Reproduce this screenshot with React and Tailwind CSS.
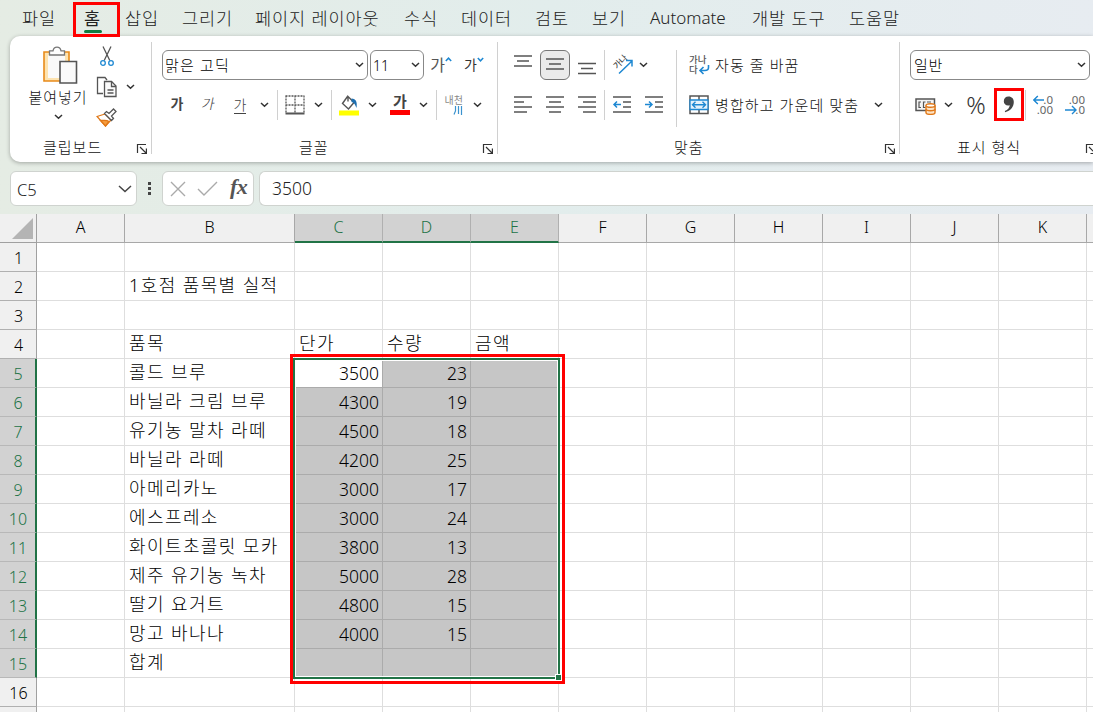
import clsx from 'clsx'

const TABS = [
  { label: '파일', w: 'w-[53px]' },
  { label: '홈', w: 'w-[50px]', active: true },
  { label: '삽입', w: 'w-[57px]' },
  { label: '그리기', w: 'w-[73px]' },
  { label: '페이지 레이아웃', w: 'w-[149px]' },
  { label: '수식', w: 'w-[57px]' },
  { label: '데이터', w: 'w-[74px]' },
  { label: '검토', w: 'w-[57px]' },
  { label: '보기', w: 'w-[58px]' },
  { label: 'Automate', w: 'w-[102px]', latin: true },
  { label: '개발 도구', w: 'w-[97px]' },
  { label: '도움말', w: 'w-[60px]' },
]

const COLUMNS = ['A', 'B', 'C', 'D', 'E', 'F', 'G', 'H', 'I', 'J', 'K', '']

const CELLS = {
  2: { B: '1호점 품목별 실적' },
  4: { B: '품목', C: '단가', D: '수량', E: '금액' },
  5: { B: '콜드 브루', C: 3500, D: 23 },
  6: { B: '바닐라 크림 브루', C: 4300, D: 19 },
  7: { B: '유기농 말차 라떼', C: 4500, D: 18 },
  8: { B: '바닐라 라떼', C: 4200, D: 25 },
  9: { B: '아메리카노', C: 3000, D: 17 },
  10: { B: '에스프레소', C: 3000, D: 24 },
  11: { B: '화이트초콜릿 모카', C: 3800, D: 13 },
  12: { B: '제주 유기농 녹차', C: 5000, D: 28 },
  13: { B: '딸기 요거트', C: 4800, D: 15 },
  14: { B: '망고 바나나', C: 4000, D: 15 },
  15: { B: '합계' },
}

const ROWS = Array.from({ length: 16 }, (_, i) => i + 1)
const GRID = 'grid w-[1175px] grid-cols-[37px_88px_170px_repeat(10,88px)] grid-rows-[29px]'

const isSelectedCol = c => c === 'C' || c === 'D' || c === 'E'
const isSelectedRow = r => r >= 5 && r <= 15

function Chevron({ className }) {
  return (
    <span className={clsx('flex shrink-0 items-center justify-center', className)}>
      <svg width="9" height="6" viewBox="0 0 9 6" fill="none" stroke="#333" strokeWidth="1.5">
        <path d="M1 1l3.5 3.3L8 1" />
      </svg>
    </span>
  )
}

function Divider({ className }) {
  return (
    <span className={clsx('flex h-[30px] shrink-0 justify-center', className)}>
      <span className="w-px bg-[#d0d0d0]" />
    </span>
  )
}

function Slot({ className, children }) {
  return <span className={clsx('flex h-[30px] shrink-0 items-center justify-center', className)}>{children}</span>
}

function Lines({ rows, children }) {
  return (
    <svg width="20" height="20" viewBox="0 0 20 20" fill="none" stroke="#555" strokeWidth="1.5">
      {rows.map(([x1, x2, y]) => <path key={y} d={`M${x1} ${y}H${x2}`} />)}
      {children}
    </svg>
  )
}

function GroupFooter({ label, labelClass }) {
  return (
    <div className="mt-[16px] flex h-[22px] items-center text-[15px] leading-[22px] tracking-[1px] text-[#111]">
      <span className={clsx('shrink-0 whitespace-nowrap', labelClass)}>{label}</span>
      <svg className="mt-1 shrink-0" width="12" height="12" viewBox="0 0 12 12" fill="none" stroke="#333" strokeWidth="1.2">
        <path d="M1.5 10V1.5H10M4 4l6 6M10.4 5.5v5H5.5" />
      </svg>
    </div>
  )
}

function ClipboardGroup() {
  return (
    <section className="flex w-[141px] shrink-0 flex-col">
      <div className="-mt-[5px] flex h-[75px]">
        <div className="ml-[14px] flex w-[68px] flex-col items-center">
          <svg className="ml-[4px] shrink-0" width="36" height="40" viewBox="0 0 36 40" fill="none">
            <path d="M2 7h25v29H2z" fill="#fde3b0" stroke="#e88b1a" strokeWidth="1.6" />
            <path d="M6 10h17v23H6z" fill="#fafafa" />
            <path d="M7.500 10V5.800h3.500C12 1 18 1 19 5.800h3.500V10z" fill="#fff" stroke="#777" strokeWidth="1.300" />
            <path d="M18 16.500h16.500v21.500H18z" fill="#fafafa" stroke="#555" strokeWidth="1.600" />
          </svg>
          <span className="mt-[2px] whitespace-nowrap text-[15px] leading-[20px] tracking-[1px] text-[#111]">붙여넣기</span>
          <Chevron className="mt-[7px]" />
        </div>
        <div className="ml-[4px] flex w-[22px] flex-col items-center">
          <svg className="mt-[1px] shrink-0" width="16" height="21" viewBox="0 0 16 21" fill="none" strokeWidth="1.300">
            <path d="M4 .5l6.800 14M12 .5L5.200 14.500" stroke="#555" />
            <circle cx="4" cy="17" r="2.300" stroke="#1e88d2" />
            <circle cx="12" cy="17" r="2.300" stroke="#1e88d2" />
          </svg>
          <svg className="mt-[9px] shrink-0" width="22" height="22" viewBox="0 0 22 22" stroke="#555" strokeWidth="1.300">
            <path d="M7 17.500H1.500V1.500H9L11 4" fill="#fff" />
            <path d="M8.500 5.500h7l4.500 4.500v10.500H8.500z" fill="#fafafa" />
            <path d="M15.500 5.500v5H20M11.500 14h6M11.500 17h6" fill="none" />
          </svg>
          <svg className="mt-[10px] shrink-0" width="22" height="20" viewBox="0 0 22 20" strokeWidth="1.300">
            <path d="M9 6L1 8.500l8.500 9.500 5.500-6z" fill="#fff" stroke="#e07818" />
            <path d="M4.500 12.500c3 .2 6-.8 8.500 1l-3.500 4.500z" fill="#f59b3c" stroke="#e07818" />
            <path d="M8.500 5.500L10.500 3.500l2.500 2 4.500-4.500 2.500 2.500-4.500 4.500 2 2.500-2 2z" fill="#fff" stroke="#555" />
          </svg>
        </div>
        <Chevron className="ml-[6px] mt-[32px] h-[20px] w-[12px]" />
      </div>
      <GroupFooter label="클립보드" labelClass="ml-[33px] w-[93px]" />
    </section>
  )
}

function FontGroup() {
  return (
    <section className="flex w-[345px] shrink-0 flex-col">
      <div className="ml-[10px] flex h-[30px] items-center">
        <div className="flex h-[30px] w-[206px] items-center justify-between rounded-[6px] border border-[#888] pl-[2px] pr-[2px] text-[15px] text-black">
          <span className="tracking-[1.2px]">맑은 고딕</span>
          <Chevron className="w-[11px]" />
        </div>
        <div className="ml-[2px] flex h-[30px] w-[54px] items-center justify-between rounded-[6px] border border-[#888] pl-[2px] pr-[2px] text-[14px] text-black">
          11
          <Chevron className="w-[11px]" />
        </div>
        <Slot className="ml-[5px] w-[24px]">
          <span className="text-[16px] font-normal leading-[20px] text-[#555]">가</span>
          <svg className="mb-[11px] shrink-0" width="7" height="5" viewBox="0 0 7 5" fill="none" stroke="#1e88d2" strokeWidth="1.500"><path d="M.8 4L3.500 1.200 6.200 4" /></svg>
        </Slot>
        <Slot className="ml-[10px] w-[22px]">
          <span className="text-[14px] font-normal leading-[20px] text-[#333]">가</span>
          <svg className="mb-[11px] shrink-0" width="7" height="5" viewBox="0 0 7 5" fill="none" stroke="#1e88d2" strokeWidth="1.500"><path d="M.8 1L3.500 3.800 6.200 1" /></svg>
        </Slot>
      </div>
      <div className="ml-[10px] mt-[10px] flex h-[30px] items-center text-[14px] leading-[17px] text-[#444]">
        <Slot className="w-[30px] pb-[3px] font-bold">가</Slot>
        <Slot className="w-[32px] pb-[3px]"><span className="-skew-x-12">가</span></Slot>
        <Slot className="w-[32px]"><span className="border-b border-[#444] leading-[16px]">가</span></Slot>
        <Chevron className="w-[16px]" />
        <Divider className="w-[10px]" />
        <Slot className="w-[26px]">
          <svg width="20" height="20" viewBox="0 0 20 20" fill="none" stroke="#555">
            <path d="M.5 1H19M.5 10H19M1 .5V18M10 .5V18M19 .5V18" strokeDasharray="2 1" strokeWidth="1.300" />
            <path d="M.5 18.500h19" strokeWidth="1.800" />
          </svg>
        </Slot>
        <Chevron className="w-[21px]" />
        <Divider className="w-[4px]" />
        <Slot className="w-[32px]">
          <svg width="20" height="21" viewBox="0 0 20 21" fill="none">
            <path d="M8.500 1.500L3.500 8.500l6 5.500L15 7.500 9 1.500v5" stroke="#555" strokeWidth="1.400" />
            <path d="M12.500 3.500c4.500.3 6 3.500 5 9.500-1.500-3.500-2-5.500-5-6z" fill="#1e6fb0" />
            <path d="M0 15.500h20v5H0z" fill="#ff0" />
          </svg>
        </Slot>
        <Chevron className="w-[14px]" />
        <Slot className="ml-[4px] w-[34px] flex-col">
          <span className="h-[15px] text-[15px] font-bold leading-[12px]">가</span>
          <span className="h-[5px] w-[20px] bg-[#f00]" />
        </Slot>
        <Chevron className="w-[12px]" />
        <Divider className="w-[14px]" />
        <Slot className="w-[20px] flex-col items-end">
          <span className="h-[11px] whitespace-nowrap text-[10px] font-normal leading-[10px] text-[#888]">내천</span>
          <svg width="10" height="9" viewBox="0 0 10 9" fill="none" stroke="#3b93cf" strokeWidth="1.200"><path d="M2.500 0v5L1 8.500M5.500 0v8M8.500 0v9" /></svg>
        </Slot>
        <Chevron className="w-[28px]" />
      </div>
      <GroupFooter label="글꼴" labelClass="ml-[147px] w-[183px]" />
    </section>
  )
}

const INDENT = [[1, 19, 2], [11, 19, 7], [11, 19, 12], [1, 19, 17]]

function AlignmentGroup() {
  return (
    <section className="flex w-[401px] shrink-0 flex-col">
      <div className="flex h-[70px]">
        <div className="flex w-[178px] flex-col gap-[10px] pl-[9px]">
          <div className="flex h-[30px] items-center">
            <Slot className="w-[32px]"><Lines rows={[[1, 19, 1], [4, 16, 6], [1, 19, 11]]} /></Slot>
            <Slot className="w-[32px]">
              <span className="flex h-[30px] w-[30px] items-center justify-center rounded-[6px] border border-[#777] bg-[#ebebeb]">
                <Lines rows={[[1, 19, 4], [4, 16, 9], [1, 19, 14]]} />
              </span>
            </Slot>
            <Slot className="w-[32px]"><Lines rows={[[1, 19, 8.5], [4, 16, 13.5], [1, 19, 18.5]]} /></Slot>
            <Divider className="w-[3px]" />
            <Slot className="w-[28px]">
              <svg width="28" height="30" viewBox="0 0 28 30" fill="none">
                <text transform="translate(11 19.500) rotate(-45)" fontSize="8.500" fontWeight="500" fill="#444" fontFamily="Noto Sans CJK KR, sans-serif">가나</text>
                <path d="M13 23.500L26 11M20 10.500H26V16.500" stroke="#1e88d2" strokeWidth="1.500" />
              </svg>
            </Slot>
            <Chevron className="ml-[2px] w-[15px]" />
          </div>
          <div className="flex h-[30px] items-center">
            <Slot className="w-[32px]"><Lines rows={[[1, 19, 2], [1, 11, 7], [1, 19, 12], [1, 14, 17]]} /></Slot>
            <Slot className="w-[32px]"><Lines rows={[[1, 19, 2], [4, 16, 7], [1, 19, 12], [4, 16, 17]]} /></Slot>
            <Slot className="w-[32px]"><Lines rows={[[1, 19, 2], [6, 19, 7], [1, 19, 12], [6, 19, 17]]} /></Slot>
            <Divider className="w-[3px]" />
            <Slot className="w-[32px]">
              <Lines rows={INDENT}><path d="M9 9.500H1.800M5 6.500l-3 3 3 3" stroke="#1e88d2" /></Lines>
            </Slot>
            <Slot className="w-[32px]">
              <Lines rows={INDENT}><path d="M1 9.500H8.200M5 6.500l3 3-3 3" stroke="#1e88d2" /></Lines>
            </Slot>
          </div>
        </div>
        <div className="flex h-[77px] flex-col gap-[10px] border-l border-[#d0d0d0] pl-[12px] text-[15px] tracking-[1.1px] text-[#111]">
          <div className="flex h-[30px] items-center">
            <span className="relative flex h-[20px] w-[20px] shrink-0 flex-col text-[9.5px] font-medium leading-[10px] tracking-normal text-[#555]">
              <span className="whitespace-nowrap">가나</span>
              <span>다</span>
              <svg className="absolute -right-px bottom-0" width="12" height="11" viewBox="0 0 12 11" fill="none" stroke="#1e88d2" strokeWidth="1.600">
                <path d="M10.500 1v2.500c0 2-1.500 3-3.500 3H2M5.500 3L2 6.500 5.500 10" />
              </svg>
            </span>
            <span className="ml-[6px] whitespace-nowrap">자동 줄 바꿈</span>
          </div>
          <div className="flex h-[30px] items-center">
            <svg width="20" height="20" viewBox="0 0 20 20" fill="none">
              <path d="M1 1h18v17.500H1zM10 1v4M10 14.500v4" stroke="#555" strokeWidth="1.500" />
              <path d="M1 5h18v9.500H1z" fill="#e3f1fb" stroke="#1e88d2" strokeWidth="1.300" />
              <path d="M3.500 9.800h13M6.500 6.800l-3 3 3 3M13.500 6.800l3 3-3 3" stroke="#1e88d2" strokeWidth="1.400" />
            </svg>
            <span className="ml-[6px] w-[153px] whitespace-nowrap">병합하고 가운데 맞춤</span>
            <Chevron className="w-[20px]" />
          </div>
        </div>
      </div>
      <GroupFooter label="맞춤" labelClass="ml-[176px] w-[210px]" />
    </section>
  )
}

function Decimals({ top, bottom, flip }) {
  return (
    <span className="relative flex h-[21px] w-[20px] flex-col items-end font-['Noto_Sans',sans-serif] text-[11.5px] font-normal leading-[10px] text-[#666]">
      <span>{top}</span>
      <span>{bottom}</span>
      {flip ? (
        <svg className="absolute bottom-[1px] left-0" width="12" height="10" viewBox="0 0 12 10" fill="none" stroke="#1e88d2" strokeWidth="1.400">
          <path d="M0 5h11M7 1l4 4-4 4" />
        </svg>
      ) : (
        <svg className="absolute left-0 top-0" width="12" height="10" viewBox="0 0 12 10" fill="none" stroke="#1e88d2" strokeWidth="1.400">
          <path d="M11 5H.800M4.800 1l-4 4 4 4" />
        </svg>
      )}
    </span>
  )
}

function NumberGroup() {
  return (
    <section className="flex w-[200px] shrink-0 flex-col pl-[10px]">
      <div className="flex h-[30px] w-[180px] items-center justify-between rounded-[6px] border border-[#888] pl-[3px] pr-[2px] text-[15px] text-black">
        <span className="tracking-[0.8px]">일반</span>
        <Chevron className="w-[11px]" />
      </div>
      <div className="mt-[10px] flex h-[30px] items-center">
        <Slot className="ml-[4px] w-[22px]">
          <svg width="21" height="20" viewBox="0 0 21 20" fill="none">
            <path d="M1 4h18.500v11.500H1z" fill="#f4f4f4" stroke="#555" strokeWidth="1.500" />
            <path d="M6 7H4v5.500h2M10.500 7h-2v5.500h2M12 7h4" stroke="#555" strokeWidth="1.200" />
            <path d="M11 10.500v7c0 2.500 9 2.500 9 0v-7" fill="#fde3c4" stroke="#e07818" strokeWidth="1.400" />
            <ellipse cx="15.500" cy="10.500" rx="4.500" ry="1.800" fill="#fff" stroke="#e07818" strokeWidth="1.400" />
            <path d="M11 14c0 2.300 9 2.300 9 0" stroke="#e07818" strokeWidth="1.400" />
          </svg>
        </Slot>
        <Chevron className="w-[24px]" />
        <Slot className="ml-[4px] w-[24px]">
          <span className="text-[24px] font-light leading-[28px] text-[#333]">%</span>
        </Slot>
        <span className="ml-[6px] flex h-[33px] w-[30px] shrink-0 -translate-y-px items-center justify-center border-[3px] border-[#f00]">
          <svg width="12" height="17" viewBox="0 0 12 17" fill="#444">
            <path d="M5.500.5C8.800.5 10.800 2.800 10.800 6c0 5-3.300 9-8.600 10.200L1.800 15C4.800 13.800 6.500 12 6.800 9.300 3.500 10.300.8 8.300.8 5.300.8 2.500 2.800.5 5.500.5z" />
          </svg>
        </span>
        <Divider className="w-[2px]" />
        <Slot className="ml-[7px] w-[20px]"><Decimals top=".0" bottom=".00" /></Slot>
        <Slot className="ml-[12px] w-[20px]"><Decimals top=".00" bottom=".0" flip /></Slot>
      </div>
      <GroupFooter label="표시 형식" labelClass="ml-[47px] w-[128px]" />
    </section>
  )
}

function GroupRule() {
  return <span className="-mt-[8px] h-[112px] w-px shrink-0 bg-[#d0d0d0]" />
}

function FormulaBar() {
  return (
    <div className="mt-[9px] flex h-[35px] items-center pl-[10px] text-[17px] text-[#222]">
      <div className="flex h-full w-[127px] items-center justify-between rounded-[6px] border border-[#cfd3cf] bg-white pl-[6px] pr-[4px]">
        <span className="mt-[4px] text-[16.5px]">C5</span>
        <svg width="14" height="8" viewBox="0 0 14 8" fill="none" stroke="#444" strokeWidth="1.500"><path d="M1 1l6 5.500L13 1" /></svg>
      </div>
      <div className="flex w-[25px] flex-col items-center gap-[2px]">
        <span className="h-[3px] w-[3px] bg-[#444]" />
        <span className="h-[3px] w-[3px] bg-[#444]" />
        <span className="h-[3px] w-[3px] bg-[#444]" />
      </div>
      <div className="flex h-full w-[92px] items-center rounded-[6px] border border-[#cfd3cf] bg-white pl-[7px]">
        <svg width="16" height="16" viewBox="0 0 16 16" fill="none" stroke="#aaa" strokeWidth="1.400"><path d="M1 1l14 14M15 1L1 15" /></svg>
        <svg className="ml-[11px]" width="21" height="16" viewBox="0 0 21 16" fill="none" stroke="#aaa" strokeWidth="1.400"><path d="M1 8l6 6L20 1" /></svg>
        <span className="-mt-[3px] ml-[12px] font-['Liberation_Serif',serif] text-[22px] font-bold italic leading-[24px] tracking-[-0.5px] text-[#555]">fx</span>
      </div>
      <div className="ml-[5px] flex h-full flex-1 items-center rounded-l-[6px] border border-r-0 border-[#cfd3cf] bg-white pl-[12px] text-[17.5px]">3500</div>
    </div>
  )
}

function HeaderRow() {
  return (
    <div className={clsx(GRID, 'h-[29px] text-[16px] leading-[27px] text-black')}>
      <div className="flex items-end justify-end border-b border-r border-[#a0a0a0] bg-[#f0f0f0] pb-[3px] pr-[3px]">
        <svg width="21" height="21" viewBox="0 0 21 21" fill="#b4b4b4"><path d="M21 0v21H0z" /></svg>
      </div>
      {COLUMNS.map((c, i) => (
        <div
          key={i}
          className={clsx(
            'border-r text-center',
            isSelectedCol(c)
              ? 'border-b-2 border-b-[#217346] border-r-[#b0b0b0] bg-[#d2d2d2] text-[#217346]'
              : 'border-b border-[#a8a8a8] bg-[#f0f0f0]',
          )}
        >
          {c}
        </div>
      ))}
    </div>
  )
}

function SheetRow({ n }) {
  const selectedRow = isSelectedRow(n)
  return (
    <div className={clsx(GRID, 'h-[29px] text-[17px] text-black')}>
      <div
        className={clsx(
          'border-b pl-px pt-px text-center text-[16px] leading-[28px]',
          selectedRow
            ? 'border-r-2 border-b-[#b8b8b8] border-r-[#217346] bg-[#d2d2d2] text-[#217346]'
            : 'border-r border-b-[#b0b0b0] border-r-[#a0a0a0] bg-[#f0f0f0]',
        )}
      >
        {n}
      </div>
      {COLUMNS.map((c, i) => {
        const v = CELLS[n]?.[c]
        const selected = selectedRow && isSelectedCol(c)
        const active = n === 5 && c === 'C'
        return (
          <div
            key={i}
            className={clsx(
              'whitespace-nowrap border-b border-r',
              typeof v === 'number'
                ? 'pr-[3px] text-right text-[17.5px] leading-[28px]'
                : 'pl-[4px] text-[18px] leading-[27px] tracking-[1.4px]',
              selected ? 'border-[#ababab]' : 'border-[#dedede]',
              selected && !active ? 'bg-[#c6c6c6]' : 'bg-white',
            )}
          >
            {v}
          </div>
        )
      })}
    </div>
  )
}

// sliver of the next row that shows under row 16
function PartialRow() {
  return (
    <div className={GRID}>
      <div className="border-r border-[#a0a0a0] bg-[#f0f0f0]" />
      {COLUMNS.map((c, i) => <div key={i} className="border-r border-[#dedede] bg-white" />)}
    </div>
  )
}

export default function App() {
  return (
    <div className="h-[712px] w-[1093px] overflow-hidden bg-linear-to-r from-[#e5ece4] via-[#e2edec] to-[#e7ecf1] font-['Noto_Sans','Noto_Sans_CJK_KR',sans-serif] font-light">
      <nav className="flex h-[36px] pl-[22px] text-[17.5px] leading-[36px] text-[#222]">
        {TABS.map(t => (
          <div
            key={t.label}
            className={clsx(
              'relative shrink-0 whitespace-nowrap',
              t.w,
              t.latin ? 'text-[17px] tracking-normal' : 'tracking-[0.9px]',
              t.active && 'pl-[9px] font-normal',
            )}
          >
            {t.label}
            {t.active && (
              <>
                <span className="absolute left-[9px] top-[30px] h-[3px] w-[18px] rounded-full bg-[#107c41]" />
                <span className="absolute -left-[2px] top-[2px] z-10 h-[35px] w-[47px] border-[3px] border-[#f00]" />
              </>
            )}
          </div>
        ))}
      </nav>

      <div className="ml-[10px] flex h-[126px] overflow-hidden rounded-l-[10px] bg-white pt-[14px] shadow-[0_1px_4px_rgba(0,0,0,0.3)]">
        <ClipboardGroup />
        <GroupRule />
        <FontGroup />
        <GroupRule />
        <AlignmentGroup />
        <GroupRule />
        <NumberGroup />
      </div>

      <FormulaBar />

      <div className="relative mt-[8px] overflow-hidden">
        <HeaderRow />
        {ROWS.map(n => <SheetRow key={n} n={n} />)}
        <PartialRow />

        {/* selection outline with its fill handle */}
        <div className="absolute left-[293px] top-[144px] h-[321px] w-[267px] border-2 border-[#217346]">
          <div className="h-full w-full border border-white" />
          <span className="absolute -bottom-[4px] -right-[4px] h-[7px] w-[7px] border border-white bg-[#217346]" />
        </div>
        <div className="absolute left-[290px] top-[140px] h-[330px] w-[275px] border-[3px] border-[#f00]" />
      </div>
    </div>
  )
}
